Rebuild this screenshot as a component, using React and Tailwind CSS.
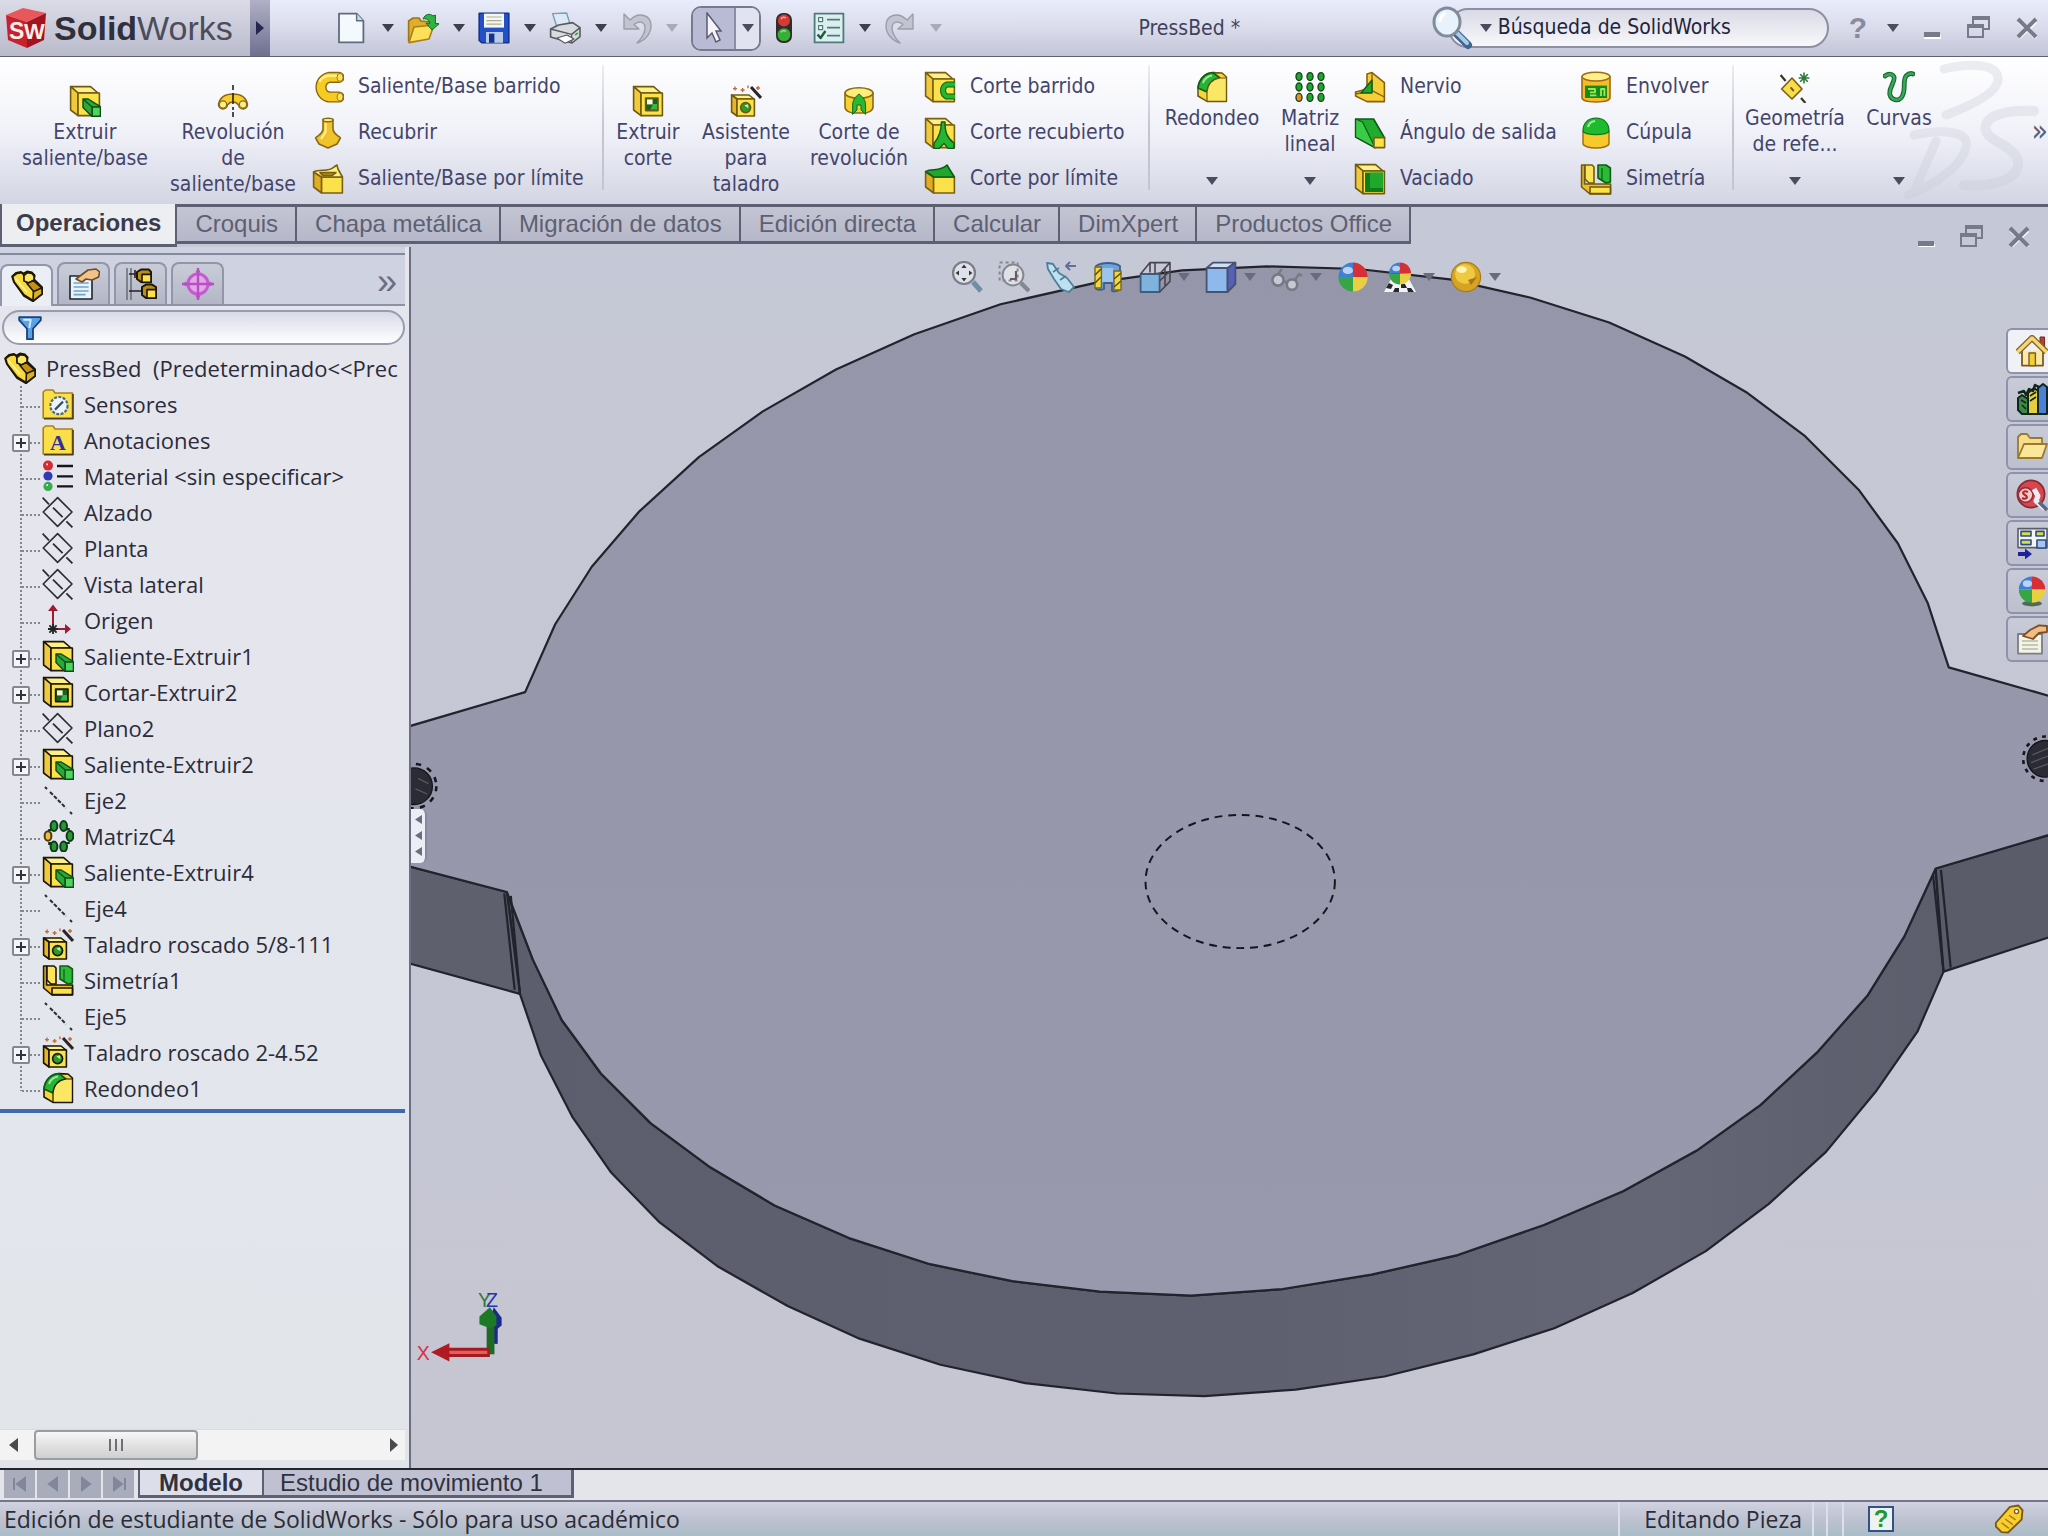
import React, { useState } from "react";

const Ico = ({ children, className = "size-8" }) => (
  <svg viewBox="0 0 16 16" className={`${className} shrink-0`} fill="none" strokeLinejoin="round" aria-hidden="true">{children}</svg>
);

const Caret = ({ className = "text-[#4b4d5e]" }) => (
  <svg viewBox="0 0 12 8" className={`h-2 w-3 shrink-0 ${className}`} aria-hidden="true"><path d="M0 0h12L6 8z" fill="currentColor" /></svg>
);

/* ---------- feature icons ---------- */

const Box = ({ line }) => (
  <g stroke={line} strokeWidth="0.8">
    <path d="M.8.8h10L14.500 4H4.500z" fill="#fdf08a" />
    <path d="M.8.8 4.500 4v11.300L.8 12.500z" fill="#f1c93c" />
    <path d="M4.500 4h10.700v11.300H4.500z" fill="#fbe14a" />
  </g>
);

const BossIcon = ({ line = "#6f5a12" }) => (
  <Ico>
    <Box line={line} />
    <path d="M7 7h2.600l5.900 3.700v5h-4L7 11.300z" fill="#2ba83a" stroke="#0b4d14" strokeWidth="0.700" />
    <path d="M7 7l4.600 4v4.500" stroke="#0b4d14" strokeWidth="0.600" />
    <path d="M11.600 11h4.100v4.600h-4.100z" fill="#4fd25e" stroke="#0b4d14" strokeWidth="0.700" />
  </Ico>
);

const CutIcon = ({ line = "#6f5a12" }) => (
  <Ico>
    <Box line={line} />
    <path d="M6.800 6.500h6.200v6.300H6.800z" fill="#1d5f20" stroke={line} strokeWidth="0.800" />
    <path d="M7.500 7.200h2.800v2.500H7.500z" fill="#f4fbd8" />
    <path d="M10.500 9.500h2v2.700h-3.300z" fill="#36b83e" />
  </Ico>
);

const RevolveIcon = () => (
  <Ico>
    <path d="M.8 9.500C1.500 6 4 4.500 8 4.500s6.500 1.500 7.200 5a2.200 2.200 0 1 1-4.400.5C10 8.800 9 8.500 8 8.500s-2 .3-2.800 1.500a2.200 2.200 0 1 1-4.400-.5z" fill="#f6cf2e" stroke="#8a6612" strokeWidth="0.800" />
    <circle cx="3" cy="9.700" r="1.800" fill="#fdf08a" stroke="#8a6612" strokeWidth="0.600" />
    <circle cx="13" cy="9.700" r="1.800" fill="#fdf08a" stroke="#8a6612" strokeWidth="0.600" />
    <path d="M8 0v2.500M8 4v5.500M8 11v1.500M8 13.500V16" stroke="#222" strokeWidth="0.800" />
  </Ico>
);

const SweepIcon = () => (
  <Ico>
    <path d="M13.500 3.200H8.500a5 5 0 0 0 0 9.800h5" stroke="#8a6612" strokeWidth="5.600" strokeLinecap="round" />
    <path d="M13.500 3.200H8.500a5 5 0 0 0 0 9.800h5" stroke="#f6cb22" strokeWidth="4.200" strokeLinecap="round" />
    <path d="M12.500 2.400H8a6 6 0 0 0-4.300 3" stroke="#fdf08a" strokeWidth="1.200" />
    <ellipse cx="14" cy="3.200" rx="1.500" ry="2" fill="#fbe35c" stroke="#a87a18" strokeWidth="0.500" />
    <ellipse cx="14" cy="13" rx="1.500" ry="2" fill="#fbe35c" stroke="#a87a18" strokeWidth="0.500" />
  </Ico>
);

const LoftIcon = () => (
  <Ico>
    <path d="M5.500 1.200v5C5 9 3 9 1.800 10.500L3.500 13.500 8 15.500l4.500-2 1.700-3C13 9 11 9 10.500 6.200v-5z" fill="#f0c32a" stroke="#8a6a1a" strokeWidth="0.800" />
    <ellipse cx="8" cy="1.500" rx="2.500" ry="0.900" fill="#fdf08a" stroke="#8a6a1a" strokeWidth="0.700" />
    <path d="M6.800 3v4.500L4.500 11" stroke="#fdf39a" strokeWidth="1" />
  </Ico>
);

const BoundaryIcon = () => (
  <Ico>
    <g stroke="#7a5f14" strokeWidth="0.800">
      <path d="M.8 4.500l4 2.500v8L.8 12z" fill="#e0ac22" />
      <path d="M4.800 7h10.400v8H4.800z" fill="#fbe14a" />
      <path d="M.8 4.500C4 2.500 8 5 11 2l1.500-1 .5 2 2.200 4H4.800z" fill="#fdef80" />
      <path d="M4 4.800h8l-2 1.500H5.500z" fill="#c28d1a" />
    </g>
  </Ico>
);

const HoleWizardIcon = ({ line = "#6f5a12" }) => (
  <Ico>
    <g stroke={line} strokeWidth="0.800">
      <path d="M.8 5h8.700L12 7H3.500z" fill="#fdf08a" />
      <path d="M.8 5 3.500 7v8.500L.8 13.500z" fill="#e6b52a" />
      <path d="M3.500 7h8.700v8.500H3.500z" fill="#fbe14a" />
      <circle cx="7.800" cy="11.300" r="2.500" fill="#2f9a2c" />
    </g>
    <path d="M7.200 10.200l1.800-.6.200 2z" fill="#d9f3a0" />
    <path d="M10.500 1l5 5.500" stroke="#2a2426" strokeWidth="1.500" />
    <path d="M2.500.8v2M1.500 1.800h2M6.300 1.500v2M5.300 2.500h2M14 .5v2M13 1.500h2M9 .2v1.400" stroke="#c4683a" strokeWidth="0.700" />
  </Ico>
);

const RevolveCutIcon = () => (
  <Ico>
    <path d="M1 4v7c0 1.800 2.500 3 4.500 3h5c2 0 4.500-1.200 4.500-3V4z" fill="#f6d22e" stroke="#8a6a1a" strokeWidth="0.800" />
    <ellipse cx="8" cy="4" rx="7" ry="2.600" fill="#fdee7a" stroke="#8a6a1a" strokeWidth="0.800" />
    <path d="M8 4.500c-2 1.500-3.200 3-3.200 6v4.200L7 12.500V10h2v2.500l2.300 2.200v-4.200c0-3-1.300-4.500-3.300-6z" fill="#2bb636" stroke="#116a1a" strokeWidth="0.500" />
  </Ico>
);

const SweepCutIcon = () => (
  <Ico>
    <Box line="#7a5f14" />
    <path d="M15.500 6.800h-4.200a3.400 3.400 0 0 0 0 6h4.200" stroke="#0f5c18" strokeWidth="3" />
    <path d="M15.500 6.800h-4.200a3.400 3.400 0 0 0 0 6h4.200" stroke="#24b531" strokeWidth="2" />
  </Ico>
);

const LoftCutIcon = () => (
  <Ico>
    <Box line="#7a5f14" />
    <path d="M8.700 2.500h1.800c0 5 1 8 4.500 10.500v2.700h-3l-2-2.500-2.500 2.500H5v-2.500c2.500-3 3.700-6 3.700-10.700z" fill="#24b531" stroke="#0f5c18" strokeWidth="0.700" />
  </Ico>
);

const BoundaryCutIcon = () => (
  <Ico>
    <g stroke="#7a5f14" strokeWidth="0.800">
      <path d="M.8 4.500l4 2.500v8L.8 12z" fill="#e0ac22" />
      <path d="M4.800 7h10.400v8H4.800z" fill="#fbe14a" />
    </g>
    <path d="M.8 4.200C4 2.500 8 4.500 11.500 1l1.500 2.500 2.200 3.500H4.800z" fill="#1fa82c" stroke="#0f5c18" strokeWidth="0.800" />
  </Ico>
);

const FilletIcon = ({ line = "#6f5a12" }) => (
  <Ico>
    <path d="M1 8.500C1.500 4 4.500 1 8.500.8L13 1l2.200 2v12.200H5.500L1 12.500z" fill="#f7d63a" stroke={line} strokeWidth="0.800" />
    <path d="M1 8.500C1.500 4 4.500 1 8.500.8l3.500 2.700C8.500 4 6 6.500 5.500 10.500z" fill="#27b434" stroke="#0f5c18" strokeWidth="0.800" />
    <path d="M3.500 6C4.200 4 6 2.500 8 2.200" stroke="#9be79c" strokeWidth="1" />
    <path d="M5.500 10.500C6 6.500 8.500 4 12 3.500h3.200v11.700H5.500z" fill="#fbe765" stroke={line} strokeWidth="0.600" />
  </Ico>
);

const PatternIcon = () => (
  <Ico>
    {[2.5, 8, 13.5].map((x) => [2.8, 8, 13.2].map((y) => (
      <ellipse key={`${x}-${y}`} cx={x} cy={y} rx="1.500" ry="2" fill={x === 2.5 && y === 13.2 ? "#f08a2a" : "#22a52e"} stroke="#14491a" strokeWidth="0.700" />
    )))}
  </Ico>
);

const RibIcon = () => (
  <Ico>
    <path d="M.8 10.500 6.500 9V1.500L9 .8l6.200 5v9.500H6.500L.8 12.500z" fill="#f7cf3a" stroke="#8a6112" strokeWidth="0.800" />
    <path d="M9 .8v9L15.200 13M9 9.800.8 11.500" stroke="#8a6112" strokeWidth="0.700" />
    <path d="M9 4.500v6.500H3.500z" fill="#22a52e" stroke="#0f5c18" strokeWidth="0.700" />
  </Ico>
);

const DraftIcon = () => (
  <Ico>
    <path d="M.8 1h9l5.500 9.500-4.800 4.800L.8 10z" fill="#20ac2c" stroke="#0f5c18" strokeWidth="0.800" />
    <path d="M.8 1l3.500 1.500L10.500 15.300.8 10z" fill="#3ccb48" stroke="#0f5c18" strokeWidth="0.600" />
    <path d="M10 10.300h5.300v5H10z" fill="#fbe14a" stroke="#7a5f14" strokeWidth="0.800" />
  </Ico>
);

const ShellIcon = () => (
  <Ico>
    <Box line="#6f5a12" />
    <path d="M5.500 4.800h9v9.700h-9z" fill="#0f7d1b" />
    <path d="M8 4.800h6.500v7.700H8z" fill="#1fa82c" />
  </Ico>
);

const WrapIcon = () => (
  <Ico>
    <path d="M1 2.800v10.500c0 1.500 3 2.200 7 2.200s7-.7 7-2.200V2.800z" fill="#f4bd27" stroke="#a06a14" strokeWidth="0.800" />
    <ellipse cx="8" cy="2.800" rx="7" ry="2.200" fill="#fdf08a" stroke="#a06a14" strokeWidth="0.700" />
    <path d="M2.500 7.300h11v6.200h-11z" fill="#148a22" />
    <path d="M4 9h3.500v1.700H5M5 12.200h3.200M10.500 12.500V9h1.700v3.500" stroke="#9bea4c" strokeWidth="0.900" />
  </Ico>
);

const DomeIcon = () => (
  <Ico>
    <path d="M1.500 7v6.300c0 1.300 3 2.200 6.500 2.200s6.500-.9 6.500-2.200V7z" fill="#f8c92a" stroke="#a06a14" strokeWidth="0.700" />
    <path d="M1.500 7C1.500 3 4 .6 8 .6S14.500 3 14.500 7c0 1-3 1.800-6.500 1.800S1.500 8 1.500 7z" fill="#1fba2e" stroke="#117a1c" strokeWidth="0.600" />
    <path d="M4 5c.5-1.800 1.500-2.800 3.500-3" stroke="#9bf09c" strokeWidth="1.100" />
  </Ico>
);

const MirrorIcon = ({ line = "#6f5a12" }) => (
  <Ico>
    <path d="M.8 1h1.500v9.500h13v5H5L.8 12z" fill="#f0bd2a" stroke={line} strokeWidth="0.800" />
    <path d="M2.500 1H6l1 1v8H4.500l-2-2z" fill="#fbe35c" stroke={line} strokeWidth="0.800" />
    <path d="M9 1h4l2.200 1.500V9.500l-2.200.5L9 7.500z" fill="#2cba38" stroke="#0f5c18" strokeWidth="0.800" />
    <path d="M11 2.500v6" stroke="#0f5c18" strokeWidth="0.600" />
    <path d="M5 12h10.200v3.300H5z" fill="#fbe14a" stroke={line} strokeWidth="0.800" />
  </Ico>
);

const RefGeometryIcon = () => (
  <Ico>
    <path d="M6.500 3.500l5 5.500-5 5-5.200-5z" fill="#f8dc4a" stroke="#7a5f14" strokeWidth="0.800" />
    <path d="M5.800 8.200l1.600 1.800" stroke="#7a5f14" strokeWidth="1" />
    <path d="M.8 2l2.500 3M11 13.500l2.200 2.500" stroke="#3a3420" strokeWidth="1.100" />
    <path d="M12.500.8v5.400M9.800 3.500h5.400M10.600 1.600l3.800 3.800M14.400 1.600l-3.800 3.800" stroke="#2f7a38" strokeWidth="0.800" />
  </Ico>
);

const CurvesIcon = () => (
  <Ico>
    <path d="M1 2.500C3 1 5 1.500 5.500 3c.8 2.500-3 5.500-2 9 .6 2.500 4 3.200 5.500 1.500 3-3.500.5-8 2.500-11 1-1 2.500-1.500 3.500-1" stroke="#176b32" strokeWidth="2.400" strokeLinecap="round" />
    <path d="M1 2.500C3 1 5 1.500 5.500 3c.8 2.500-3 5.500-2 9 .6 2.500 4 3.200 5.500 1.500 3-3.500.5-8 2.500-11 1-1 2.500-1.500 3.500-1" stroke="#3aa85a" strokeWidth="1.200" strokeLinecap="round" />
  </Ico>
);

/* ---------- tree icons ---------- */

const PartIcon = () => (
  <Ico>
    <path d="M.6 3.200 2.500 1.500 5 1l1.200.8L8 .8l2.500.5 1.300 1.400-.3 2 4.100 4v3.300L11 15.600 6.500 13 1.500 6z" fill="#d9b11f" stroke="#1d1704" strokeWidth="1" />
    <path d="M.8 3.300 3 1.700l2.500-.3 1 1.400V5l4.800 4.200-.3 6L6.600 12.500 1.600 6z" fill="#f7da3c" stroke="#1d1704" strokeWidth="0.800" />
    <path d="M6.500 2.800 8.200 1.300l2.300.4 1 1.300v2L9 6.500l-2.500-1z" fill="#fbe765" stroke="#1d1704" strokeWidth="0.800" />
    <path d="M8 6.800l3.300-1.500 4 3.700-4 1.700z" fill="#c48f16" stroke="#1d1704" strokeWidth="0.800" />
    <path d="M2.200 4.200 8 11" stroke="#fdf3a0" strokeWidth="0.800" />
  </Ico>
);

const FolderBase = () => (
  <g>
    <path d="M.6 15V2l1.200-1H5.500l1 1.500h8.700V15z" fill="#fbdf4a" stroke="#a8821c" strokeWidth="0.800" />
    <path d="M15.500 3v12.400H1" stroke="#4d3d10" strokeWidth="0.800" />
  </g>
);

const SensorIcon = () => (
  <Ico>
    <FolderBase />
    <circle cx="8.500" cy="8.800" r="4.300" fill="#eef4f4" stroke="#4d6a86" strokeWidth="1.100" strokeDasharray="1.500 .7" />
    <path d="M6.500 10.800l4-4" stroke="#2b4d77" strokeWidth="1.100" />
  </Ico>
);

const AnnotationIcon = () => (
  <Ico>
    <FolderBase />
    <text x="8" y="13.200" fontSize="11" fontWeight="700" fontFamily="Liberation Serif, serif" textAnchor="middle" fill="#2f2f9d">A</text>
  </Ico>
);

const MaterialIcon = () => (
  <Ico>
    <circle cx="3" cy="2.800" r="2.500" fill="#d92a33" />
    <circle cx="3" cy="8" r="2.300" fill="#3038b4" />
    <circle cx="3" cy="13.200" r="2.300" fill="#36ad4a" />
    <path d="M2.200 2.200h.8M2.200 12.600h.8" stroke="#fff" strokeWidth="0.900" />
    <path d="M7.500 3h8M7.500 8.200h8M7.500 13.200h8" stroke="#15151a" strokeWidth="1.200" />
  </Ico>
);

const PlaneIcon = () => (
  <Ico>
    <path d="M7.800.8 15 8 7.800 15.200.6 8z" stroke="#2c2c33" strokeWidth="0.800" />
    <path d="M.3.8l3.200 3.400M5.500 5.800l4.800 4.800M12.200 12.700l3 3" stroke="#2c2c33" strokeWidth="0.900" />
  </Ico>
);

const OriginIcon = () => (
  <Ico>
    <path d="M5.500 11V2M6.500 12.500h6" stroke="#9c1c34" strokeWidth="1" />
    <path d="M5.500.3 8 3.500H3zM14.500 12.500 11.500 15v-5z" fill="#9c1c34" />
    <path d="M5.500 10v5M3 12.500h5M3.700 10.700l3.600 3.600M7.300 10.700l-3.600 3.600" stroke="#222" strokeWidth="0.900" />
  </Ico>
);

const AxisIcon = () => (
  <Ico>
    <path d="M1.500 1.500l1 1M4 4l8 8M14 14l1 1" stroke="#2c2c33" strokeWidth="1" strokeDasharray="2 .8" />
  </Ico>
);

const CircPatternIcon = () => (
  <Ico>
    {[[6, 3], [10.8, 3], [6, 13.3], [10.8, 13.3], [14, 8]].map(([x, y]) => (
      <ellipse key={`${x}-${y}`} cx={x} cy={y} rx="1.700" ry="2.500" fill="#249a35" stroke="#12381a" strokeWidth="1" />
    ))}
    <ellipse cx="3" cy="8" rx="1.700" ry="2.400" fill="#eebd3b" stroke="#4a3a10" strokeWidth="1" />
    <path d="M4 5.500v-1M4 11v1.500M13 5.200V4M13 11v1" stroke="#12381a" strokeWidth="1.800" />
  </Ico>
);

/* ---------- quick access icons ---------- */

const NewIcon = () => (
  <Ico>
    <path d="M1.500.8h8.800l3.400 3.600v10.800H1.500z" fill="#f4f9fd" stroke="#5d6d7d" strokeWidth="0.900" />
    <path d="M10.300.8v3.600h3.400" fill="#c9d8e6" stroke="#5d6d7d" strokeWidth="0.700" />
  </Ico>
);

const OpenIcon = () => (
  <Ico>
    <path d="M.8 14.500V4.500L3 3h3l1 1.500 5 .5v4z" fill="#e2ae2a" stroke="#9a7419" strokeWidth="0.800" />
    <path d="M1 15.300 3.500 7.500 13.500 6.500l-2.500 7z" fill="#fde05a" stroke="#a87f1c" strokeWidth="0.800" />
    <path d="M8 3.500C9 1 11.500.5 13 2l1.200-.5V5.800h2L12.500 9 9.500 5.600h2C11 4 9.500 3 8 3.500z" fill="#2fb344" stroke="#146a24" strokeWidth="0.500" />
  </Ico>
);

const SaveIcon = () => (
  <Ico>
    <path d="M.6.6h14.800v14.800H2l-1.400-1.200z" fill="#2350c8" stroke="#16328a" strokeWidth="0.800" />
    <path d="M3 .8h10v7H3z" fill="#f6f8ef" />
    <path d="M4.200 2.500h7.600M4.200 4.300h7.600M4.200 6.100h7.600" stroke="#a9ad9c" strokeWidth="0.600" />
    <path d="M4 10h8.500v5.400H4z" fill="#b9cbe8" />
    <path d="M5.500 10.800h2.700v4.600H5.500z" fill="#16328a" />
  </Ico>
);

const PrintIcon = () => (
  <Ico>
    <path d="M1.800.8l7-.3 2 6.500H3.800z" fill="#dceaf6" stroke="#7f9ab4" strokeWidth="0.700" />
    <path d="M.8 8.500l4-2 7-1.200 3.700 2.500v4.500l-4 3.200L.8 12.500z" fill="#d9dade" stroke="#565961" strokeWidth="0.800" />
    <path d="M.8 8.500l10.500 2.700 4.200-3.400M11.300 11.200v4.300" stroke="#565961" strokeWidth="0.700" />
    <path d="M4 13l5-1.500 3.500 2L8 15.600z" fill="#fff" stroke="#565961" strokeWidth="0.600" />
    <path d="M13 11.500l1.500-1" stroke="#3a3" strokeWidth="0.800" />
  </Ico>
);

const UndoIcon = () => (
  <Ico>
    <path d="M2 1v7.500h7.500L7 6.200C10 4 12.500 5 12.500 8S11 13 8.500 15.500c4.500-1.500 7-5 7-8.500C15.500 1.500 9.500-.5 5 4z" fill="#c3c4d0" stroke="#9c9dac" strokeWidth="0.700" />
  </Ico>
);

const RedoIcon = () => (
  <Ico>
    <path d="M14.500 1v7.500H7L9.500 6.200C6.500 4 4 5 4 8s1.500 5 4 7.500C3.500 14 1 10.500 1 7 1 1.500 7-.5 11.500 4z" fill="#c3c4d0" stroke="#9c9dac" strokeWidth="0.700" />
  </Ico>
);

const TrafficIcon = () => (
  <svg viewBox="0 0 9 16" className="h-8 w-[18px] shrink-0" aria-hidden="true">
    <rect x="0.500" y="0.500" width="8" height="15" rx="3.500" fill="#332c2c" />
    <circle cx="4.500" cy="4.300" r="3" fill="#d63a34" />
    <circle cx="4.500" cy="11.300" r="3.200" fill="#35b034" />
    <path d="M3 3.500q1-1.500 2.500-.5M3 10.200q1-1.500 2.500-.5" stroke="#fff" strokeOpacity=".6" strokeWidth="0.700" fill="none" />
  </svg>
);

const OptionsIcon = () => (
  <Ico>
    <path d="M.8.8h14.400v14.400H.8z" fill="#dcefee" stroke="#4c7a7d" strokeWidth="0.900" />
    <path d="M2.800 2.800h2v2h-2zM2.800 6.800h2v2h-2z" fill="#fff" stroke="#4c7a7d" strokeWidth="0.600" />
    <path d="M7 3.800h6.500M7 7.800h6.500M7 11.800h6.500" stroke="#4c7a7d" strokeWidth="0.800" />
    <path d="M2.300 11.200l1.500 1.800 2.400-3.500" stroke="#1c5c3c" strokeWidth="1.200" />
  </Ico>
);

const quickTools = [
  { name: "Nuevo", Icon: NewIcon },
  { name: "Abrir", Icon: OpenIcon },
  { name: "Guardar", Icon: SaveIcon },
  { name: "Imprimir", Icon: PrintIcon },
  { name: "Deshacer", Icon: UndoIcon, off: true },
];

function QuickTool({ name, Icon, off }) {
  return (
    <div className="flex w-[71px] items-center gap-[14px]">
      <button aria-label={name}><Icon /></button>
      <button aria-label={`Menú ${name}`}><Caret className={off ? "text-[#a9abb9]" : "text-[#3d3f4e]"} /></button>
    </div>
  );
}

function WindowButtons({ gap }) {
  return (
    <div className={`flex items-center ${gap}`}>
      <button aria-label="Minimizar"><svg viewBox="0 0 18 26" className="h-[26px] w-[18px]"><path d="M2 20h16v4H1z" fill="#fff" /><path d="M1 17h16v5H1z" fill="#777a88" /></svg></button>
      <button aria-label="Restaurar">
        <svg viewBox="0 0 26 26" className="size-[26px]" fill="none">
          <path d="M8 3h16v11h-5M8 3v6M3 11h15v11H3z" stroke="#777a88" strokeWidth="2" />
          <path d="M7 3h18M2 11h17" stroke="#777a88" strokeWidth="4" />
        </svg>
      </button>
      <button aria-label="Cerrar">
        <svg viewBox="0 0 24 26" className="h-[26px] w-6" fill="none"><path d="M4 7l17 16M21 7L4 23" stroke="#fff" strokeWidth="3" /><path d="M3 4l18 18M21 4L3 22" stroke="#777a88" strokeWidth="4" /></svg>
      </button>
    </div>
  );
}

function TitleBar() {
  return (
    <header className="flex h-[57px] items-stretch border-b border-[#5f6273] bg-linear-to-b from-[#e9ecfa] via-[#dadcec] to-[#c3c4d6]">
      <div className="flex w-[250px] items-center gap-[7px] bg-linear-to-b from-[#dcdce8] to-[#b9bacb] pl-[5px]">
        <svg viewBox="0 0 42 42" className="size-[42px] shrink-0" aria-hidden="true">
          <path d="M1 8 18 1l23 5-19 9z" fill="#e8575c" />
          <path d="M1 8l21 7v26L3 33z" fill="#c8202c" />
          <path d="M22 15 41 6l-2 27-17 8z" fill="#a5121f" />
          <text x="4" y="32" fontSize="23" fontWeight="700" fontFamily="Liberation Sans, sans-serif" fill="#fbeee6">S</text>
          <text x="19" y="32" fontSize="22" fontWeight="700" fontFamily="Liberation Sans, sans-serif" fill="#fbeee6">W</text>
        </svg>
        <span className="font-['Liberation_Sans',sans-serif] text-[34px] leading-10 text-[#4c4d5a]"><b className="text-[#2f303b]">Solid</b>Works</span>
      </div>
      <button aria-label="Expandir menú" className="flex w-5 items-center justify-center bg-linear-to-b from-[#b0b1c6] to-[#6f7090]">
        <svg viewBox="0 0 8 14" className="h-[14px] w-2"><path d="M0 0l8 7-8 7z" fill="#23264f" /></svg>
      </button>

      <div className="ml-[66px] flex items-center">
        {quickTools.map((t) => <QuickTool key={t.name} {...t} />)}
        <div className="flex h-[45px] w-[70px] overflow-hidden rounded-[10px] border-2 border-[#77798f]">
          <button aria-label="Seleccionar" className="flex w-[43px] items-center justify-center border-r-2 border-[#8c8ea5] bg-[#b9bad3]">
            <svg viewBox="0 0 16 32" className="h-8 w-4"><path d="M1 1v25l5-5 4 9 4-2-4-9h5z" fill="#f4f4fa" stroke="#5a5c70" strokeWidth="1.500" /></svg>
          </button>
          <button aria-label="Menú Seleccionar" className="flex flex-1 items-center justify-center bg-[#e2e3f0]"><Caret /></button>
        </div>
        <button aria-label="Reconstruir" className="mr-5 ml-[14px]"><TrafficIcon /></button>
        <QuickTool name="Opciones" Icon={OptionsIcon} />
        <QuickTool name="Rehacer" Icon={RedoIcon} off />
      </div>

      <h1 className="flex-1 self-center pt-[2px] pr-2 text-center font-['DejaVu_Sans_Condensed','DejaVu_Sans',sans-serif] text-[21px] text-[#40415a]">PressBed *</h1>

      <div className="relative mr-5 flex w-[397px] items-center pl-4">
        <label className="flex h-10 flex-1 items-center gap-[6px] rounded-[20px] border-2 border-[#8d8fa2] bg-linear-to-b from-[#d9dae6] to-[#f8f8fb] pl-[30px]">
          <Caret />
          <input aria-label="Búsqueda" defaultValue="Búsqueda de SolidWorks" className="w-full min-w-0 bg-transparent font-['DejaVu_Sans_Condensed','DejaVu_Sans',sans-serif] text-[21px] text-[#23243a] outline-none" />
        </label>
        <svg viewBox="0 0 42 44" className="absolute top-[6px] left-0 h-11 w-[42px]" fill="none" aria-hidden="true">
          <path d="M24 27l12 12" stroke="#3f6690" strokeWidth="8" strokeLinecap="round" />
          <path d="M25 27l10 10" stroke="#a9cbe6" strokeWidth="4" strokeLinecap="round" />
          <ellipse cx="15" cy="16" rx="13" ry="14" fill="#e8f2fb" stroke="#808b9c" strokeWidth="3" />
          <path d="M8 16c0-5 3-8 6-9" stroke="#fff" strokeWidth="3" />
        </svg>
      </div>
      <div className="flex items-center gap-5 pr-[9px]">
        <button className="font-['Liberation_Sans',sans-serif] text-[30px] leading-8 font-bold text-[#8a8c9c]">?</button>
        <button aria-label="Menú de ayuda" className="mr-1"><Caret /></button>
        <WindowButtons gap="gap-6" />
      </div>
    </header>
  );
}

/* ---------- ribbon ---------- */

function BigTool({ Icon, lines, width, menu }) {
  return (
    <button className={`flex flex-col items-center ${width} ${menu ? "pt-[14px]" : "pt-7"}`}>
      <Icon />
      <span className={`pt-[2px] leading-[26px] ${menu ? "h-[74px]" : ""}`}>
        {lines.map((l) => <span key={l} className="block whitespace-nowrap">{l}</span>)}
      </span>
      {menu && <Caret />}
    </button>
  );
}

function ToolList({ items, width }) {
  return (
    <div className={`flex flex-col gap-[14px] pt-[14px] ${width}`}>
      {items.map(([Icon, label]) => (
        <button key={label} className="flex h-8 items-center gap-[14px] whitespace-nowrap"><Icon />{label}</button>
      ))}
    </div>
  );
}

const Divider = () => <div className="mt-2 mb-[14px] w-[2px] bg-linear-to-b from-[#eceef5] via-[#c3c5d2] to-[#c3c5d2]" />;

function Ribbon() {
  return (
    <section aria-label="Operaciones" className="relative flex h-[147px] overflow-hidden bg-linear-to-b from-white via-[#f1f2f9] to-[#d3d5e3] pl-[10px] font-['DejaVu_Sans_Condensed','DejaVu_Sans',sans-serif] text-[21px] text-[#44456b]">
      <svg viewBox="0 0 148 147" className="absolute top-0 right-0 h-full w-[148px]" fill="none" stroke="#c9cbd6" strokeOpacity=".35" strokeLinecap="round" aria-hidden="true">
        <path d="M44 12c24-6 54-6 54 10 0 12-20 24-52 36" strokeWidth="9" />
        <path d="M14 78c30-6 56-4 52 12-3 16-26 36-58 48M36 84l-20 46" strokeWidth="9" />
        <path d="M134 54c-30-2-52 6-48 20 4 12 34 16 32 34-2 16-28 22-54 20" strokeWidth="10" />
      </svg>
      <BigTool Icon={BossIcon} lines={["Extruir", "saliente/base"]} width="w-[150px]" />
      <BigTool Icon={RevolveIcon} lines={["Revolución", "de", "saliente/base"]} width="w-[146px]" />
      <ToolList width="w-[296px] pl-[6px]" items={[[SweepIcon, "Saliente/Base barrido"], [LoftIcon, "Recubrir"], [BoundaryIcon, "Saliente/Base por límite"]]} />
      <Divider />
      <BigTool Icon={CutIcon} lines={["Extruir", "corte"]} width="w-[88px]" />
      <BigTool Icon={HoleWizardIcon} lines={["Asistente", "para", "taladro"]} width="w-[108px]" />
      <BigTool Icon={RevolveCutIcon} lines={["Corte de", "revolución"]} width="w-[118px]" />
      <ToolList width="w-[230px] pl-[6px]" items={[[SweepCutIcon, "Corte barrido"], [LoftCutIcon, "Corte recubierto"], [BoundaryCutIcon, "Corte por límite"]]} />
      <Divider />
      <BigTool menu Icon={FilletIcon} lines={["Redondeo"]} width="w-[124px]" />
      <BigTool menu Icon={PatternIcon} lines={["Matriz", "lineal"]} width="w-[72px]" />
      <ToolList width="w-[234px] pl-2" items={[[RibIcon, "Nervio"], [DraftIcon, "Ángulo de salida"], [ShellIcon, "Vaciado"]]} />
      <ToolList width="w-[152px]" items={[[WrapIcon, "Envolver"], [DomeIcon, "Cúpula"], [MirrorIcon, "Simetría"]]} />
      <Divider />
      <BigTool menu Icon={RefGeometryIcon} lines={["Geometría", "de refe..."]} width="w-[122px]" />
      <BigTool menu Icon={CurvesIcon} lines={["Curvas"]} width="w-[86px]" />
      <button aria-label="Más herramientas" className="ml-auto self-center text-[30px] text-[#5c5e74]">»</button>
    </section>
  );
}

const ribbonTabs = ["Operaciones", "Croquis", "Chapa metálica", "Migración de datos", "Edición directa", "Calcular", "DimXpert", "Productos Office"];

function RibbonTabs({ active, onSelect }) {
  return (
    <div className="flex h-[43px] items-start justify-between bg-[#c5c8d6] bg-linear-to-b from-[#5d6073] from-[3px] to-[#c5c8d6] to-[3px]">
      <div role="tablist" className="flex items-start border-l-2 border-[#5d6073] font-['Liberation_Sans',sans-serif] text-2xl">
        {ribbonTabs.map((t) => t === active ? (
          <button key={t} role="tab" aria-selected="true" className="h-[43px] border-r-2 border-b-3 border-[#5d6073] bg-[#eceef2] px-[14px] pb-[2px] font-bold whitespace-nowrap text-[#3a3c4c]">{t}</button>
        ) : (
          <button key={t} role="tab" aria-selected="false" onClick={() => onSelect(t)} className="mt-[3px] h-[37px] border-r-2 border-b-3 border-[#5d6073] bg-linear-to-b from-[#c3c5d3] to-[#b6b8ca] pr-[17px] pl-[18px] whitespace-nowrap text-[#5e6072]">{t}</button>
        ))}
      </div>
      <div className="pt-5 pr-[17px]"><WindowButtons gap="gap-[23px]" /></div>
    </div>
  );
}

/* ---------- feature manager ---------- */

const features = [
  { label: "Sensores", Icon: SensorIcon },
  { label: "Anotaciones", Icon: AnnotationIcon, expand: true },
  { label: "Material <sin especificar>", Icon: MaterialIcon },
  { label: "Alzado", Icon: PlaneIcon },
  { label: "Planta", Icon: PlaneIcon },
  { label: "Vista lateral", Icon: PlaneIcon },
  { label: "Origen", Icon: OriginIcon },
  { label: "Saliente-Extruir1", Icon: BossIcon, expand: true },
  { label: "Cortar-Extruir2", Icon: CutIcon, expand: true },
  { label: "Plano2", Icon: PlaneIcon },
  { label: "Saliente-Extruir2", Icon: BossIcon, expand: true },
  { label: "Eje2", Icon: AxisIcon },
  { label: "MatrizC4", Icon: CircPatternIcon },
  { label: "Saliente-Extruir4", Icon: BossIcon, expand: true },
  { label: "Eje4", Icon: AxisIcon },
  { label: "Taladro roscado 5/8-111", Icon: HoleWizardIcon, expand: true },
  { label: "Simetría1", Icon: MirrorIcon },
  { label: "Eje5", Icon: AxisIcon },
  { label: "Taladro roscado 2-4.52", Icon: HoleWizardIcon, expand: true },
  { label: "Redondeo1", Icon: FilletIcon },
];

function Branch({ expand, last }) {
  return (
    <svg viewBox="0 0 42 36" className="h-9 w-[42px]" fill="none" aria-hidden="true">
      <path d={last ? "M21 0v21" : "M21 0v36"} stroke="#85878f" strokeWidth="2" strokeDasharray="2 2" />
      <path d="M22 21h20" stroke="#85878f" strokeWidth="2" strokeDasharray="2 2" />
      {expand && <rect x="13" y="13" width="16" height="16" rx="1" fill="#f4f5f9" stroke="#85878f" strokeWidth="2" />}
      {expand && <path d="M16 21h10M21 16v10" stroke="#33343f" strokeWidth="2" />}
    </svg>
  );
}

const PropertyIcon = () => (
  <Ico>
    <path d="M1 4h11v11.500H1z" fill="#e9f3fb" stroke="#20242c" strokeWidth="0.800" />
    <path d="M2.800 7.500h7.500M2.800 9.500h7.500M2.800 11.500h7.500M2.800 13.300h6" stroke="#6fa5cf" strokeWidth="0.800" />
    <path d="M4 5.500 8 2.500 10 1l4-.5 1.800 1.500-.5 2.500-3.300 1.500-3-.5-2 1.500z" fill="#f2c48c" stroke="#6d4d22" strokeWidth="0.800" />
  </Ico>
);

const ConfigIcon = () => (
  <Ico>
    <path d="M1 0v16M3 0v16" stroke="#55565f" strokeWidth="0.600" />
    <path d="M2 3h5M2 11.500h6M5 1v4" stroke="#222" strokeWidth="0.800" />
    <path d="M6 2l2-1.200h4l1 1.200V7H8L6 5.500zM8.500 9.500l2-1.200h3l2 1.200V15h-5l-2-1.500z" fill="#b98d17" stroke="#1d1704" strokeWidth="1" />
    <path d="M8.500 3.200H13v4H8.500zM11 10.800h4.500V15H11z" fill="#fbe14a" stroke="#1d1704" strokeWidth="0.800" />
  </Ico>
);

const TargetIcon = () => (
  <Ico>
    <circle cx="8" cy="8" r="5" fill="#e2a9e6" stroke="#c45ccf" strokeWidth="1.500" />
    <path d="M8 0v16M0 8h16" stroke="#b84fc4" strokeWidth="1.200" />
    <path d="M8 0l1.300 2.200H6.700zM8 16l1.300-2.200H6.700zM0 8l2.200-1.300v2.600zM16 8l-2.200-1.300v2.600z" fill="#b84fc4" />
  </Ico>
);

const panelTabs = [
  ["Árbol de operaciones", PartIcon],
  ["PropertyManager", PropertyIcon],
  ["ConfigurationManager", ConfigIcon],
  ["DimXpertManager", TargetIcon],
];

function FeatureManager() {
  const [panel, setPanel] = useState(0);

  return (
    <aside className="flex w-[411px] shrink-0 flex-col border-r-2 border-[#6c6f82] bg-linear-to-b from-[#e5e5ed] via-[#e4e6ed] to-[#e1e5ea] pr-1">
      <div className="flex h-[59px] flex-col border-b-2 border-[#8f92a5] bg-[#cfd2e1] pt-[6px]">
        <div className="flex flex-1 items-end justify-between border-t-2 border-[#8589a0] pr-2">
          <div role="tablist" className="flex items-end gap-1">
            {panelTabs.map(([name, Icon], i) => (
              <button key={name} role="tab" aria-label={name} aria-selected={panel === i} onClick={() => setPanel(i)} className={`flex h-[42px] w-[53px] items-center justify-center rounded-t-lg border-2 border-b-0 border-[#9396a8] ${panel === i ? "-mb-[2px] bg-[#eceef5]" : "bg-linear-to-b from-[#c9ccd8] to-[#b3b6c6]"}`}><Icon /></button>
            ))}
          </div>
          <button aria-label="Más" className="pb-1 font-['Liberation_Sans',sans-serif] text-[36px] leading-9 text-[#6b6d80]">»</button>
        </div>
      </div>

      <label className="mt-1 ml-[2px] flex h-[35px] items-center rounded-[18px] border-2 border-[#9a9cae] bg-linear-to-b from-[#d8dbe7] to-white pl-[14px]">
        <Ico className="size-6"><path d="M.8.8h14.400v2L10 8.500v7H6v-7L.8 2.800z" fill="#5aa2e6" stroke="#1c3f7c" strokeWidth="1.200" /><path d="M3.500 2.500h5L7.500 8" stroke="#d5ecfc" strokeWidth="1.200" /></Ico>
        <input aria-label="Filtrar árbol" className="w-full min-w-0 bg-transparent outline-none" />
      </label>

      <ul role="tree" className="mt-[5px] border-b-4 border-[#4069ae] pb-[3px] font-['Open_Sans','Noto_Sans',sans-serif] text-[22px] text-[#2b2c38]">
        <li role="treeitem" className="flex h-9 items-center gap-[10px] pl-1 whitespace-pre"><PartIcon />PressBed  (Predeterminado&lt;&lt;Prec</li>
        {features.map(({ label, Icon, expand }, i) => (
          <li key={label} role="treeitem" className="flex h-9 items-center whitespace-nowrap">
            {expand ? <button aria-label={`Expandir ${label}`}><Branch expand /></button> : <Branch last={i === features.length - 1} />}
            <Icon line="#1d1704" />
            <span className="pl-[10px]">{label}</span>
          </li>
        ))}
      </ul>

      <div className="mt-auto mb-2 flex h-[31px] items-center border-t border-[#dcdcde] bg-[#f3f3f4] pr-[6px] pl-2">
        <button aria-label="Izquierda"><svg viewBox="0 0 10 14" className="h-[14px] w-[10px]"><path d="M10 0v14L1 7z" fill="#4a4a4e" /></svg></button>
        <div className="ml-4 flex h-[30px] w-[164px] items-center justify-center gap-1 rounded-sm border-2 border-[#9b9ca0] bg-linear-to-b from-[#f6f6f6] to-[#cfcfd1]">
          <i className="h-3 w-[2px] bg-[#6f7074]" /><i className="h-3 w-[2px] bg-[#6f7074]" /><i className="h-3 w-[2px] bg-[#6f7074]" />
        </div>
        <button aria-label="Derecha" className="ml-auto"><svg viewBox="0 0 10 14" className="h-[14px] w-[10px]"><path d="M1 0v14l8-7z" fill="#4a4a4e" /></svg></button>
      </div>
    </aside>
  );
}

/* ---------- graphics area ---------- */

const topEdge = "402,530 425,478 453,434 489,392 535,350 584,315 640,283 700,256 766,233 841,216 905,207 970,204 1040,206 1110,214 1172,228 1232,247 1290,273 1338,301 1382,334 1423,375 1453,416 1476,462 1492,511";
const frontEdge = "1482,665 1458,717 1430,762 1392,805 1348,846 1299,881 1243,912 1182,938 1116,961 1050,976 982,987 912,992 842,989 775,981 712,968 650,948 593,923 544,894 498,860 460,822 430,781 408,735 388,683";
const lowerEdge = "398,761 414,808 438,855 468,898 505,936 550,970 603,1000 658,1025 720,1045 785,1059 855,1067 922,1069 992,1064 1060,1054 1128,1037 1190,1017 1250,990 1306,958 1354,922 1398,882 1436,836 1468,790 1488,744";

function Scene() {
  return (
    <svg viewBox="314.600 189.100 1253.400 935" preserveAspectRatio="xMidYMid slice" className="absolute inset-0 size-full" strokeLinejoin="round" aria-label="PressBed">
      <defs>
        <linearGradient id="face" x1="0" y1="0" x2="0" y2="1"><stop offset="0" stopColor="#9596a9" /><stop offset="1" stopColor="#9899ac" /></linearGradient>
        <linearGradient id="rim" x1="0" y1="0" x2="1" y2="0"><stop offset="0" stopColor="#5d5e6d" /><stop offset=".5" stopColor="#5f606f" /><stop offset=".8" stopColor="#646575" /><stop offset="1" stopColor="#5d5e6c" /></linearGradient>
      </defs>
      <g stroke="#22232c" strokeWidth="1.700">
        <polygon points={`${lowerEdge} ${frontEdge}`} fill="url(#rim)" />
        <polygon points="300,660 388,683 398,761 300,734" fill="#5f606e" />
        <polygon points="1482,665 1580,636 1580,714 1488,744" fill="#5a5c69" />
        <polygon points={`300,560 ${topEdge} 1580,536 1580,636 ${frontEdge} 300,660`} fill="url(#face)" />
        <path d="M386 684l8 74M391 686l7 75M1480 670l8 74M1486 666l7.500 75" fill="none" />
      </g>
      <ellipse cx="949.500" cy="675" rx="72.500" ry="51" fill="none" stroke="#15161c" strokeWidth="1.500" strokeDasharray="6 4.500" />
      <g fill="#2a2b34" stroke="#15161c">
        <circle cx="317" cy="602" r="14" />
        <circle cx="1566" cy="581" r="14" />
        <circle cx="317" cy="602" r="17" fill="none" strokeWidth="2" strokeDasharray="4 5" />
        <circle cx="1566" cy="581" r="17" fill="none" strokeWidth="2" strokeDasharray="3 4" />
        <path d="M1556 578l12-5M1555 584l13-5M1557 589l11-4M320 596l8 4M318 604l9 4" stroke="#55575f" fill="none" />
      </g>
      <g fontFamily="Liberation Sans, sans-serif" fontSize="15">
        <path d="M378 1007v22" stroke="#1b2a8a" strokeWidth="6" />
        <path d="M378 1001l6 8v6l-5 4-5-6z" fill="#1b2a8a" />
        <path d="M375.500 1012v25" stroke="#1e6a26" strokeWidth="6" />
        <path d="M375 1001l5 7v7l-5 2-8-3v-6z" fill="#1c7a26" />
        <path d="M342 1035.500h33" stroke="#a01c22" strokeWidth="7" />
        <path d="M342 1035.500h31" stroke="#ef5a55" strokeWidth="2.500" />
        <path d="M330 1035.500l14-7v14z" fill="#b01a20" />
        <text x="319" y="1041" fill="#d8304a">X</text>
        <text x="366" y="1001" fill="#2c7a3a">Y</text>
        <text x="372" y="1001" fill="#2a34b0">Z</text>
      </g>
    </svg>
  );
}

const Ball = ({ cx = 8, cy = 8, r = 7.3 }) => (
  <g>
    <path d={`M${cx} ${cy}V${cy - r}A${r} ${r} 0 0 0 ${cx - r} ${cy}z`} fill="#3f7fd8" />
    <path d={`M${cx} ${cy}H${cx + r}A${r} ${r} 0 0 0 ${cx} ${cy - r}z`} fill="#d62f35" />
    <path d={`M${cx} ${cy}V${cy + r}A${r} ${r} 0 0 0 ${cx + r} ${cy}z`} fill="#e9cf43" />
    <path d={`M${cx} ${cy}H${cx - r}A${r} ${r} 0 0 0 ${cx} ${cy + r}z`} fill="#35a545" />
    <ellipse cx={cx - r * 0.35} cy={cy - r * 0.45} rx={r * 0.35} ry={r * 0.25} fill="#fff" fillOpacity=".65" />
  </g>
);

const viewTools = [
  ["Zoom para ajustar", false, <Ico key="i"><path d="M11 10.500l4 4.500" stroke="#6f8ea6" strokeWidth="2.500" /><circle cx="6.500" cy="6" r="5.500" fill="#dfe1e9" stroke="#7b7d88" strokeWidth="1.100" /><path d="M6.500 1.800l1.300 1.700H5.200zM6.500 10.200l1.300-1.700H5.200zM2.300 6 4 4.700v2.600zM10.700 6 9 4.700v2.600z" fill="#33343c" /></Ico>],
  ["Zoom encuadre", false, <Ico key="i"><path d="M11.500 11l4 4" stroke="#85878f" strokeWidth="2.200" /><circle cx="7.500" cy="7" r="5.200" fill="#dfe1e9" stroke="#85878f" strokeWidth="1" /><path d="M.8.8h9v9h-9z" stroke="#85878f" strokeDasharray="1.500 1.500" /><path d="M9 5v4H6" stroke="#6b5b60" strokeWidth="1.100" /></Ico>],
  ["Vista previa", false, <Ico key="i"><path d="M1 1l3 .5L7 6l4 2.500 3.500 4.500-2.500 2.500-4-1.500-3.500-5L1.500 4z" fill="#bfe0f0" stroke="#4c7f9c" strokeWidth="0.900" /><path d="M4 5.500l3-2M7.500 9.500l3-2" stroke="#4c7f9c" strokeWidth="0.800" /><path d="M15.500 2.500h-5M12.500.5l-2 2 2 2" stroke="#5f6f9c" strokeWidth="1" /></Ico>],
  ["Vista de sección", false, <Ico key="i"><path d="M2 2.500C5 .5 11 .5 14 2.500V14c-1 1-3 1.500-4 1V11H6v3c-1 .5-3 .5-4 0z" fill="#6fa3dc" stroke="#3a5f96" strokeWidth="0.900" /><path d="M5 3.500h5.500v7H5z" fill="#9cc4ee" /><path d="M1.500 3h3.200v10.500H1.500zM11 5h3.500v9.500H11z" fill="#f1d840" stroke="#7a6a1c" strokeWidth="0.700" /><path d="M1.500 7l3-3M1.500 11l3-3M11 9l3.500-3M11 13l3.500-3" stroke="#5b5114" strokeWidth="0.800" /></Ico>],
  ["Orientación", true, <Ico key="i"><path d="M.8 6.500h9.500v9H.8z" fill="#7fb2dc" stroke="#3f5c7c" strokeWidth="0.900" /><path d="M.8 6.500 5.500.8h10v9.400l-5.200 5.300M10.300 6.500 15.500.8M8 .8v5.700M5.500.8v5M13 3.500v9M10.300 10l5.200-5" stroke="#4a4650" strokeWidth="0.800" /></Ico>],
  ["Estilo de visualización", true, <Ico key="i"><path d="M.8 3.500h10.500v12H.8z" fill="#8fb8ec" stroke="#46536f" strokeWidth="0.900" /><path d="M.8 3.500 4 .8h11.200l-3.900 2.700z" fill="#cfe0f6" stroke="#46536f" strokeWidth="0.900" /><path d="M11.300 3.500 15.200.8v10.700l-3.900 4z" fill="#5560b8" stroke="#46536f" strokeWidth="0.900" /></Ico>],
  ["Ocultar/mostrar", true, <Ico key="i"><circle cx="3.500" cy="9.500" r="2.800" fill="#c6c8d4" stroke="#777984" strokeWidth="1.300" /><circle cx="10.500" cy="11.800" r="2.600" fill="#c6c8d4" stroke="#777984" strokeWidth="1.300" /><path d="M3.500 6.500 5.500 4M6.300 10l1.700.8M12 9.500l2-3 1.500 1" stroke="#777984" strokeWidth="1.200" /></Ico>],
  ["Editar apariencia", false, <Ico key="i"><Ball /></Ico>],
  ["Aplicar escena", true, <Ico key="i"><path d="M0 15.500 3.500 9h9l3.500 6.500z" fill="#f3f3f5" /><path d="M1 13.500l1.500-2.500 2 1-1 2zM4.500 15.500l1-2h2v2zM8.500 13.500v-2h2l1 2zM12 15.500l-.5-2h2l1.500 2z" fill="#26272e" /><Ball cy={6.200} r={5.5} /></Ico>],
  ["Configuración de vista", true, <Ico key="i"><circle cx="8" cy="8" r="7.300" fill="#d6a325" stroke="#a87d18" strokeWidth="0.600" /><circle cx="7.500" cy="6.500" r="5" fill="#efc93f" /><ellipse cx="5.800" cy="4.300" rx="2.600" ry="1.700" fill="#fdf4b8" /><path d="M9 9.500l4.500-1.500-3 4z" fill="#a8741c" /></Ico>],
];

const paneTabs = [
  ["Recursos de SolidWorks", <Ico key="i"><path d="M3 8v7.300h10.500V7.500" fill="#fbe9a8" stroke="#7a5a22" strokeWidth="0.900" /><path d="M12 1h2.300v5H12z" fill="#b0413a" stroke="#6b2a22" strokeWidth="0.500" /><path d="M.8 8.500 8 1.500l7.200 7" stroke="#8a6526" strokeWidth="3" /><path d="M.8 8.500 8 1.500l7.200 7" stroke="#f4d877" strokeWidth="1.700" /><path d="M6.500 9h3.200v6.300H6.500z" fill="#f2cf3a" stroke="#7a5a22" strokeWidth="0.700" /></Ico>],
  ["Biblioteca de diseño", <Ico key="i"><path d="M1 7.500l2-1.500 3 2v7.500H3l-2-2z" fill="#3b8a44" stroke="#12251a" strokeWidth="1" /><path d="M6 5l3-2.500L11 4v11.500H6z" fill="#e6cf3e" stroke="#12251a" strokeWidth="1" /><path d="M11 2.500l2.500-2 2 1.500v13.500H11z" fill="#4b7fd8" stroke="#12251a" strokeWidth="1" /><path d="M1 5l3-1 1 2 1.500-3 2 1 1-3 2 1" stroke="#12251a" strokeWidth="1.200" /><path d="M2.500 8.500 5 10M3 11l2 2M7 6.500l3-2M7 9l3-2" stroke="#12251a" strokeWidth="0.800" /></Ico>],
  ["Explorador de archivos", <Ico key="i"><path d="M1 13.500V3l1.500-1.500h3L7 3.500h6v3" fill="#f6dc8c" stroke="#9a7a2c" strokeWidth="0.900" /><path d="M1 13.500 4 6.500h11.500l-2.500 7z" fill="#fbe799" stroke="#9a7a2c" strokeWidth="0.900" /></Ico>],
  ["Buscar", <Ico key="i"><circle cx="7.500" cy="7.500" r="6.800" fill="#d6484e" stroke="#8a2a34" strokeWidth="0.900" /><circle cx="4.800" cy="8" r="3.700" fill="#f3c9c9" stroke="#9c2f38" strokeWidth="0.900" /><path d="M6 6.500c-2-1-3.500.5-1.500 1.500s.5 2.500-1.500 1.500" stroke="#b02a34" strokeWidth="1.100" /><path d="M9 5l2 3.500-1 2.500 4.500 4" stroke="#e9eef4" strokeWidth="2.500" /><path d="M11.500 11.500l4 4" stroke="#566a80" strokeWidth="1.800" /></Ico>],
  ["Paleta de visualización", <Ico key="i"><path d="M1 .8h14.500v9.500H1z" fill="#f4f5f0" stroke="#5a5c68" strokeWidth="0.800" /><path d="M2.500 2.200h5v2.300h-5zM2.500 6.500h5v2.300h-5zM10 2.200h4v2.300h-4z" fill="#d9d94c" stroke="#2a4d8a" strokeWidth="0.800" /><path d="M10.500 6.500h4.500v4h-4.500z" fill="#a9c4ec" stroke="#2a4d8a" strokeWidth="0.800" /><path d="M1 13.500h4" stroke="#1c22a0" strokeWidth="2" /><path d="M4.500 10.800l3.500 2.700-3.500 2.700z" fill="#1c22a0" /></Ico>],
  ["Apariencias", <Ico key="i"><ellipse cx="8" cy="14.300" rx="5" ry="1.400" fill="#4f6a58" /><Ball cy={7.300} r={6.600} /></Ico>],
  ["Propiedades personalizadas", <Ico key="i"><path d="M1 5.500h12v9.800H1z" fill="#f3f3e6" stroke="#7c7d84" strokeWidth="0.900" /><path d="M3 9h8M3 11h8M3 13h8" stroke="#b9b9a8" strokeWidth="0.800" /><path d="M3.500 6.500 7 3.500l4.500-2.300 4 .3v3L11.500 5l-3 3z" fill="#f0bd86" stroke="#7c4f22" strokeWidth="0.900" /></Ico>],
];

function GraphicsArea() {
  return (
    <main className="relative flex-1 overflow-hidden bg-linear-to-b from-[#c5c8d6] to-[#c6c6d2]">
      <Scene />
      <div role="toolbar" aria-label="Ver" className="absolute inset-x-0 top-[14px] flex items-center justify-center gap-[15px] pr-2">
        {viewTools.map(([name, menu, icon]) => (
          <button key={name} aria-label={name} className="flex items-center gap-[7px]">{icon}{menu && <Caret className="text-[#6a6c7c]" />}</button>
        ))}
      </div>
      <button aria-label="Contraer panel" className="absolute top-[46%] left-0 flex h-[54px] w-4 flex-col items-center justify-center gap-[7px] rounded-r-md border-r-2 border-[#8789a0] bg-[#eceef6]">
        {[0, 1, 2].map((n) => <svg key={n} viewBox="0 0 7 9" className="h-[9px] w-[7px]"><path d="M7 0v9L0 4.500z" fill="#6a6c80" /></svg>)}
      </button>
      <nav aria-label="Panel de tareas" className="absolute top-[81px] right-0 flex flex-col gap-[2px]">
        {paneTabs.map(([name, icon], i) => (
          <button key={name} aria-label={name} className={`flex h-[46px] w-[42px] items-center justify-end rounded-l-md border-2 border-r-0 border-[#8f92a8] ${i === 0 ? "bg-[#f0f1f6]" : "bg-linear-to-b from-[#c9cbd9] to-[#bcbfce]"}`}>{icon}</button>
        ))}
      </nav>
    </main>
  );
}

/* ---------- bottom bars ---------- */

const navGlyphs = [
  ["Primero", "M3 3v12M14 3v12L6 9z"],
  ["Anterior", "M13 3v12L5 9z"],
  ["Siguiente", "M5 3v12l8-6z"],
  ["Último", "M15 3v12M4 3v12l8-6z"],
];

function ModelTabs() {
  return (
    <div className="flex h-8 border-t-2 border-[#23242c] bg-[#e4e5ea] font-['Liberation_Sans',sans-serif] text-2xl leading-6 text-[#30313e]">
      <div className="flex gap-[2px] pl-1">
        {navGlyphs.map(([name, d]) => (
          <button key={name} aria-label={name} className="flex h-7 w-[31px] items-center justify-center bg-[#a9acba]">
            <svg viewBox="0 0 18 18" className="size-[18px]"><path d={d} fill="#83869a" stroke="#83869a" strokeWidth="2" /></svg>
          </button>
        ))}
      </div>
      <div role="tablist" className="ml-1 flex h-7 border-l-2 border-[#5d6073]">
        <button role="tab" aria-selected="true" className="border-r-2 border-b-3 border-[#5d6073] bg-[#dcdeea] px-[19px] font-bold">Modelo</button>
        <button role="tab" aria-selected="false" className="border-r-3 border-b-3 border-[#5d6073] bg-[#bfc1d2] pr-7 pl-4">Estudio de movimiento 1</button>
      </div>
    </div>
  );
}

function StatusBar() {
  return (
    <footer className="flex h-9 items-stretch border-t-2 border-[#747787] bg-linear-to-b from-[#d0d2e2] via-[#bfc2d0] to-[#a9bcc8] font-['Open_Sans','Noto_Sans',sans-serif] text-[23px] leading-[34px] text-[#2b2c38]">
      <span className="pl-1 whitespace-nowrap">Edición de estudiante de SolidWorks - Sólo para uso académico</span>
      <span className="ml-auto border-l-2 border-[#dcdeea] pr-[10px] pl-6 whitespace-nowrap">Editando Pieza</span>
      <span className="w-4 border-x-2 border-[#dcdeea]" />
      <span className="ml-[14px] border-l-2 border-[#dcdeea]" />
      <button aria-label="Ayuda" className="ml-6 self-center">
        <span className="flex size-[26px] items-center justify-center border-2 border-[#34508a] bg-[#eef3f1] font-['Liberation_Sans',sans-serif] text-2xl leading-none font-bold text-[#1f9a2c]">?</span>
      </button>
      <button aria-label="Etiquetas" className="mr-6 ml-[100px] self-center">
        <Ico className="size-[30px]"><path d="M1 10 8.500 1.500 13 .8l2.200 2.500-.5 5L7.500 15.200l-3.500-.2L1 12z" fill="#f8cf2e" stroke="#7a5a12" strokeWidth="1" /><circle cx="12" cy="4" r="1.100" fill="#fff" stroke="#7a5a12" strokeWidth="0.700" /><path d="M4 10l4 3M6 8l4 3M8 6l3.500 2.500" stroke="#a67c18" strokeWidth="0.800" /></Ico>
      </button>
    </footer>
  );
}

export default function App() {
  const [tab, setTab] = useState("Operaciones");

  return (
    <div className="flex min-h-screen flex-col overflow-hidden bg-[#c5c8d6]">
      <TitleBar />
      <Ribbon />
      <RibbonTabs active={tab} onSelect={setTab} />
      <div className="flex flex-1">
        <FeatureManager />
        <GraphicsArea />
      </div>
      <ModelTabs />
      <StatusBar />
    </div>
  );
}
